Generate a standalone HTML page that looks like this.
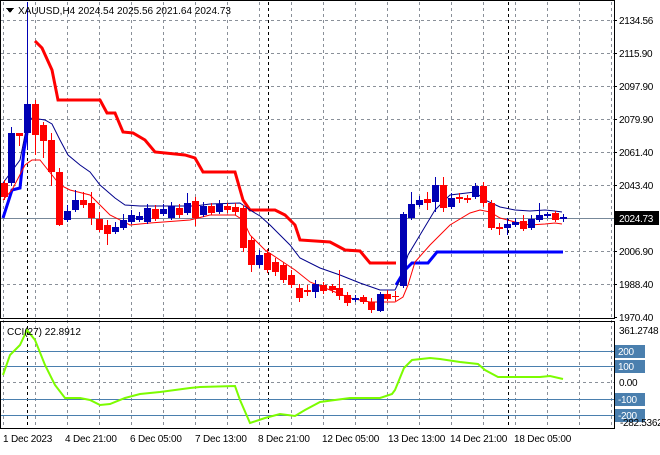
<!DOCTYPE html><html><head><meta charset="utf-8"><style>
body{margin:0;background:#fff;width:660px;height:450px;overflow:hidden;font-family:"Liberation Sans",sans-serif}
svg text{font-family:"Liberation Sans",sans-serif;font-size:10px;fill:#000}
#ax text,#cl text,.ax{letter-spacing:-0.3px}
#tl text{letter-spacing:-0.2px}
</style></head><body>
<svg width="660" height="450" viewBox="0 0 660 450" xmlns="http://www.w3.org/2000/svg" shape-rendering="crispEdges">
<g id="grid" stroke="#8a9099" stroke-dasharray="3,3" stroke-width="1"></g>
<g stroke="#000" stroke-dasharray="3,3"><line x1="27.5" y1="2" x2="27.5" y2="428"/><line x1="268.5" y1="2" x2="268.5" y2="428"/><line x1="508.5" y1="2" x2="508.5" y2="428"/></g>
<line x1="1" y1="218.5" x2="614" y2="218.5" stroke="#778899"/>
<g stroke="#4a7fae"><line x1="1" y1="351.5" x2="614" y2="351.5"/><line x1="1" y1="366.5" x2="614" y2="366.5"/><line x1="1" y1="399.5" x2="614" y2="399.5"/><line x1="1" y1="415.5" x2="614" y2="415.5"/></g>
<line x1="1" y1="382.5" x2="614" y2="382.5" stroke="#8a9099" stroke-dasharray="3,3"/>
<g fill="none" shape-rendering="auto">
<polyline stroke="#f00" stroke-width="3" points="35,41 42,48 52,70 58,100 100,100 107,113 115,113 123,132 133,133 145,140 155,152 185,155 195,158 203,172 235,172 243,200 250,210 275,210 285,215 295,225 300,240 330,242 345,250 360,251 370,263 396,263"/>
<polyline stroke="#00f" stroke-width="3" points="3,218 12,190 20,188 24,150 27,133"/>
<polyline stroke="#00f" stroke-width="3" points="396,285 405,270 412,263 428,263 437,252 563,252"/>
<polyline stroke="#00008b" stroke-width="1" points="3,183 20,160 27,125 32,118 45,120 52,124 60,140 68,155 80,165 90,172 100,185 115,198 125,205 140,206 195,206 210,204 240,203 250,210 260,216 270,225 280,235 290,245 300,258 320,268 340,275 360,283 380,290 395,290 400,280 408,255 420,235 435,210 450,195 475,192 485,200 500,207 515,210 530,211 545,210 555,211 562,212"/>
<polyline stroke="#f00" stroke-width="1" points="3,200 12,190 25,165 32,160 40,160 52,175 60,185 70,190 90,195 100,205 110,215 130,225 150,223 190,220 210,215 235,215 243,220 250,235 265,250 280,260 295,270 310,282 330,290 350,298 370,302 395,302 403,297 408,285 415,262 430,245 450,225 470,213 480,210 490,212 500,218 515,222 530,225 545,224 555,223 562,224"/>
<polyline stroke="#7cfc00" stroke-width="2" points="3,375 10,355 20,345 27,330 35,340 45,365 55,385 65,398 80,398 90,400 100,405 110,404 125,398 140,394 160,392 190,388 200,387 235,386 240,400 250,423 265,418 280,414 295,416 305,410 320,402 350,398 380,398 392,394 395,390 404,368 412,360 430,358 440,359 460,362 478,364 485,370 498,377 540,377 550,376 563,379"/>
</g>
<g id="c"></g>
<rect x="0.5" y="0.5" width="614" height="318" fill="none" stroke="#000"/>
<rect x="0.5" y="321.5" width="614" height="107" fill="none" stroke="#000"/>
<polygon points="6,8 14,8 10,13" fill="#000"/>
<text x="18" y="14">XAUUSD,H4  2024.54 2025.56 2021.64 2024.73</text>
<text x="7" y="335">CCI(27) 22.8912</text>
<g id="ax"></g>
<rect x="615" y="211" width="44" height="14" fill="#000"/><text class="ax" x="619" y="222" style="fill:#fff">2024.73</text>
<g id="cl"></g>
<text class="ax" x="619" y="334">361.2748</text><text class="ax" x="619" y="386">0.00</text><text class="ax" x="620" y="426">-282.5362</text>
<g id="tl"></g>
</svg>
<script>
var ns="http://www.w3.org/2000/svg";
function el(p,t,a,tx){var e=document.createElementNS(ns,t);for(var k in a)e.setAttribute(k,a[k]);if(tx)e.textContent=tx;document.getElementById(p).appendChild(e);}
for(var x=3;x<614;x+=32){if(x!=27)el("grid","line",{x1:x+.5,y1:2,x2:x+.5,y2:428});}
[20,53,86,119,152,185,251,284].forEach(function(y){el("grid","line",{x1:1,y1:y+.5,x2:614,y2:y+.5});});
[[20,"2134.56"],[53,"2115.90"],[86,"2097.90"],[119,"2079.90"],[152,"2061.40"],[185,"2043.40"],[251,"2006.90"],[284,"1988.40"],[317,"1970.40"]].forEach(function(a){el("ax","text",{x:619,y:a[0]+4},a[1]);el("ax","line",{x1:614,y1:a[0]+.5,x2:617,y2:a[0]+.5,stroke:"#000"});});
[[351,"200"],[366,"100"],[399,"-100"],[415,"-200"]].forEach(function(a){el("cl","rect",{x:615,y:a[0]-6,width:30,height:13,fill:"#4a7fae"});el("cl","text",{x:618,y:a[0]+4,style:"fill:#fff"},a[1]);});
[[3,"1 Dec 2023"],[65,"4 Dec 21:00"],[130,"6 Dec 05:00"],[195,"7 Dec 13:00"],[258,"8 Dec 21:00"],[322,"12 Dec 05:00"],[388,"13 Dec 13:00"],[450,"14 Dec 21:00"],[514,"18 Dec 05:00"]].forEach(function(a){el("tl","text",{x:a[0],y:442},a[1]);});
var C=[[4,183,197,180,200,"r"],[11,133,183,127,186,"b"],[19,133,136,133,146,"r"],[27,104,133,2,150,"b"],[35,104,135,100,155,"r"],[43,125,141,122,158,"r"],[51,140,172,133,186,"r"],[59,172,225,168,226,"r"],[67,211,220,205,222,"b"],[75,200,210,190,212,"b"],[83,200,205,192,208,"r"],[91,203,218,192,225,"r"],[99,219,230,212,232,"r"],[107,225,234,220,245,"r"],[115,227,232,222,234,"b"],[123,220,228,214,230,"b"],[131,215,222,210,224,"b"],[139,216,220,212,222,"b"],[147,208,222,204,224,"b"],[155,209,219,205,221,"r"],[163,209,214,204,216,"b"],[171,206,218,202,220,"b"],[179,208,215,204,218,"r"],[187,203,213,193,215,"b"],[195,201,218,197,226,"r"],[203,206,215,202,217,"b"],[211,206,213,203,215,"r"],[219,204,212,200,214,"b"],[227,206,210,203,213,"r"],[235,207,212,203,215,"r"],[243,208,248,205,252,"r"],[251,240,265,236,272,"r"],[259,255,265,250,268,"b"],[267,253,270,249,273,"r"],[275,262,272,258,276,"r"],[283,265,280,262,283,"r"],[291,275,285,270,288,"r"],[299,288,298,284,302,"r"],[307,290,292,285,296,"r"],[315,284,292,280,298,"b"],[323,285,291,282,294,"r"],[332,286,290,284,293,"r"],[339,288,296,270,300,"r"],[347,295,303,292,306,"r"],[355,298,300,295,302,"b"],[363,297,302,295,304,"r"],[371,302,310,298,313,"r"],[380,294,311,292,312,"b"],[387,294,299,290,301,"r"],[395,296,297,291,301,"r"],[403,214,286,212,288,"b"],[411,204,218,192,220,"b"],[419,200,205,196,207,"b"],[427,199,203,192,210,"r"],[435,185,202,177,212,"b"],[443,185,208,177,212,"r"],[451,198,207,193,209,"b"],[459,197,199,193,203,"r"],[467,198,200,195,203,"r"],[475,186,197,183,199,"b"],[483,186,203,182,207,"r"],[491,203,228,200,230,"r"],[499,227,229,223,235,"r"],[507,224,228,218,235,"b"],[515,222,225,218,227,"b"],[523,221,229,215,231,"r"],[531,219,228,215,230,"b"],[539,215,220,203,222,"b"],[547,214,216,212,218,"b"],[555,213,220,211,222,"r"],[563,217,219,214,222,"b"]];
C.forEach(function(c){var col=c[5]=="r"?"#f00":"#0000b4";el("c","line",{x1:c[0]+.5,y1:c[3],x2:c[0]+.5,y2:c[4],stroke:col});var h=Math.max(1,c[2]-c[1]);el("c","rect",{x:c[0]-3,y:c[1],width:7,height:h,fill:col});});
</script>
</body></html>
